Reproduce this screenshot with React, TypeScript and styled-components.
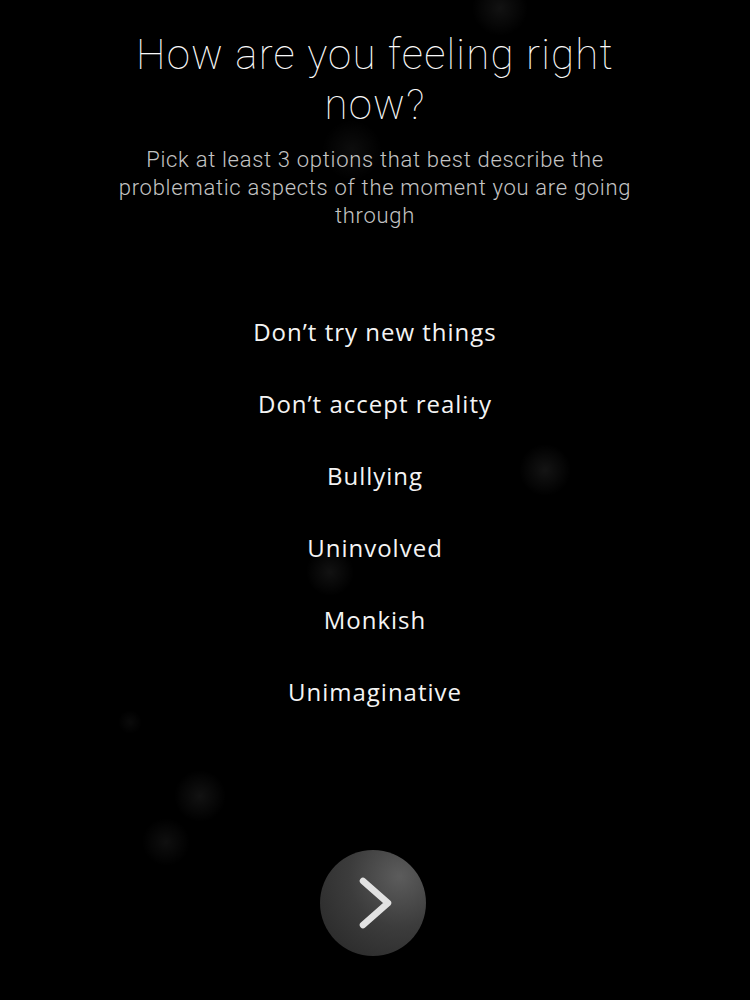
import styled, { createGlobalStyle } from 'styled-components';

const GlobalStyle = createGlobalStyle`
  html, body {
    margin: 0;
    padding: 0;
    background: #000;
  }
  * {
    box-sizing: border-box;
  }
`;

const glows = [
  'radial-gradient(circle at 500px 8px, rgba(255,255,255,0.07) 0, rgba(255,255,255,0) 28px)',
  'radial-gradient(circle at 545px 470px, rgba(255,255,255,0.08) 0, rgba(255,255,255,0) 26px)',
  'radial-gradient(circle at 330px 572px, rgba(255,255,255,0.07) 0, rgba(255,255,255,0) 24px)',
  'radial-gradient(circle at 200px 796px, rgba(255,255,255,0.07) 0, rgba(255,255,255,0) 26px)',
  'radial-gradient(circle at 166px 842px, rgba(255,255,255,0.06) 0, rgba(255,255,255,0) 24px)',
  'radial-gradient(circle at 130px 722px, rgba(255,255,255,0.04) 0, rgba(255,255,255,0) 12px)',
  'radial-gradient(circle at 352px 150px, rgba(255,255,255,0.05) 0, rgba(255,255,255,0) 30px)',
].join(', ');

const Page = styled.main`
  min-height: 100vh;
  display: flex;
  flex-direction: column;
  align-items: center;
  padding: 30px 40px 44px;
  background-color: #000;
  background-image: ${glows};
  color: #fff;
`;

const Title = styled.h1`
  margin: 0;
  width: 540px;
  text-align: center;
  font-family: Roboto, 'Liberation Sans', sans-serif;
  font-weight: 100;
  font-size: 42px;
  line-height: 50px;
  letter-spacing: 1.2px;
  color: #fafafa;
`;

const Subtitle = styled.p`
  margin: 16px 0 0;
  width: 540px;
  text-align: center;
  font-family: Roboto, 'Liberation Sans', sans-serif;
  font-weight: 300;
  font-size: 22px;
  line-height: 28px;
  letter-spacing: 0.7px;
  color: #c4c4c4;
`;

const OptionList = styled.ul`
  list-style: none;
  margin: 86px 0 0;
  padding: 0;
  display: flex;
  flex-direction: column;
  align-items: center;
  gap: 40px;
`;

const Option = styled.li`
  font-family: 'Open Sans', 'Liberation Sans', sans-serif;
  font-weight: 500;
  font-size: 24px;
  line-height: 32px;
  letter-spacing: 1px;
  color: #f4f4f4;
  cursor: pointer;
`;

const Spacer = styled.div`
  flex: 1;
`;

const NextButton = styled.button`
  width: 106px;
  height: 106px;
  border-radius: 50%;
  border: none;
  padding: 0;
  margin-right: 5px;
  display: flex;
  align-items: center;
  justify-content: center;
  cursor: pointer;
  background: radial-gradient(circle at 75% 25%, #5c5c5c 0%, #3c3c3c 45%, #252525 100%);
  box-shadow: 0 0 14px rgba(0, 0, 0, 0.6);
`;

const Chevron = () => (
  <svg width="106" height="106" viewBox="0 0 106 106" fill="none">
    <path
      d="M43 31 L68 53 L43 75"
      stroke="#e2e2e2"
      strokeWidth="6.5"
      strokeLinecap="round"
      strokeLinejoin="round"
    />
  </svg>
);

const options = [
  'Don’t try new things',
  'Don’t accept reality',
  'Bullying',
  'Uninvolved',
  'Monkish',
  'Unimaginative',
];

export default function App() {
  return (
    <>
      <GlobalStyle />
      <Page>
        <Title>How are you feeling right now?</Title>
        <Subtitle>
          Pick at least 3 options that best describe the problematic aspects of the moment you are
          going through
        </Subtitle>
        <OptionList>
          {options.map((o) => (
            <Option key={o}>{o}</Option>
          ))}
        </OptionList>
        <Spacer />
        <NextButton aria-label="Next">
          <Chevron />
        </NextButton>
      </Page>
    </>
  );
}
